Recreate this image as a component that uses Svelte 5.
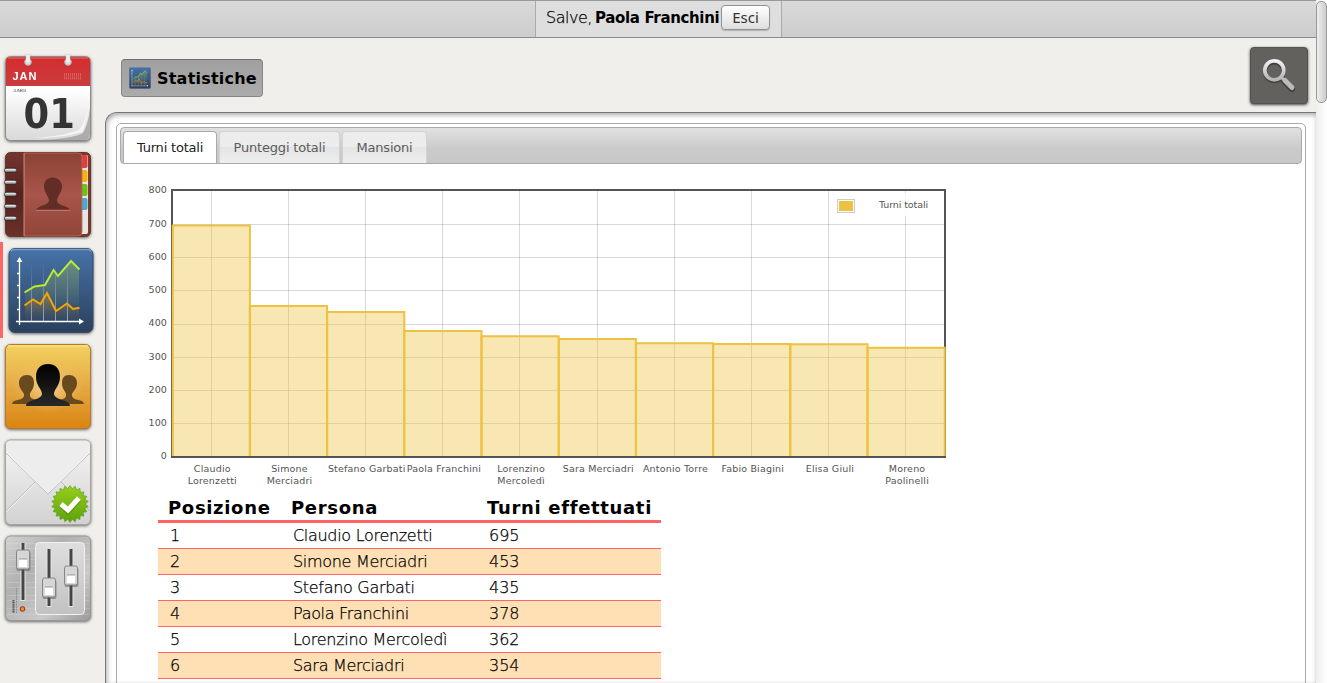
<script>
  const tabs = [
    { name: 'Turni totali', width: 94 },
    { name: 'Punteggi totali', width: 121 },
    { name: 'Mansioni', width: 85 }
  ];
  const icons = ['calendar', 'contacts', 'stats', 'people', 'mail', 'mixer'];
  const people = [
    { lines: ['Claudio', 'Lorenzetti'], turns: 695 },
    { lines: ['Simone', 'Merciadri'], turns: 453 },
    { lines: ['Stefano Garbati'], turns: 435 },
    { lines: ['Paola Franchini'], turns: 378 },
    { lines: ['Lorenzino', 'Mercoledì'], turns: 362 },
    { lines: ['Sara Merciadri'], turns: 354 },
    { lines: ['Antonio Torre'], turns: 341 },
    { lines: ['Fabio Biagini'], turns: 339 },
    { lines: ['Elisa Giuli'], turns: 338 },
    { lines: ['Moreno', 'Paolinelli'], turns: 327 }
  ];
  const ticks = [0, 100, 200, 300, 400, 500, 600, 700, 800];
  const step = 77.2;
  const left = 35;
  const base = 276.5;
  const yOf = (v) => base - v * 0.3322;
  const gear = Array.from({ length: 44 }, (_, i) => {
    const r = i % 2 ? 15.5 : 18.5;
    const a = (i * Math.PI) / 22;
    return `${70 + r * Math.sin(a)},${70 - r * Math.cos(a)}`;
  }).join(' ');
</script>

{#snippet plot()}
  <rect x="9" y="6.500" width="84" height="84" rx="6" fill="url(#blue)" stroke="#344d6b" />
  <path d="M11 9.500q0-2 4-2h72q4 0 4 2" fill="none" stroke="#7d9dc2" stroke-width="1.500" />
  <path d="M25 51l10-6 10-1 9-15 4 6 13-15 8 8v52H25z" fill="url(#greenFade)" />
  <path d="M25 64l8-6 7 4 7-10 9 17 11-7 6 5 6-1v13H25z" fill="url(#orangeFade)" />
  <path d="M31 20h1v59h-1zM43 20h1v59h-1zM55 20h1v59h-1zM67 20h1v59h-1z" fill="url(#lineFade)" />
  <path d="M19.500 18v65M16 79.500h65M17 31.500h3M17 43.500h3M17 55.500h3M17 67.500h3" stroke="#fff" stroke-width="1.300" />
  <path d="M16.500 20l3-5 3 5zM79 76.500l5 3-5 3z" fill="#fff" />
  <path d="M24.500 50.500l10-6 10.500-1.500 8.500-15 4.500 6 13-15 8.500 8.500" fill="none" stroke="#b9eb36" stroke-width="2" />
  <path d="M24.500 63.500l8.500-6 7.500 4.500 6.500-11 9 18 11-7.500 6 5.500 6.500-1.300" fill="none" stroke="#f6a400" stroke-width="2" />
{/snippet}

<svg class="defs" width="0" height="0">
  <defs>
    <linearGradient id="blue" x2="0" y2="1"><stop stop-color="#4673a9" /><stop offset="1" stop-color="#2b405c" /></linearGradient>
    <linearGradient id="greenFade" x2="0" y2="1"><stop stop-color="#b5cf45" stop-opacity=".35" /><stop offset=".85" stop-color="#b5cf45" stop-opacity="0" /></linearGradient>
    <linearGradient id="orangeFade" x2="0" y2="1"><stop stop-color="#d18a18" stop-opacity=".4" /><stop offset="1" stop-color="#d18a18" stop-opacity="0" /></linearGradient>
    <linearGradient id="lineFade" gradientUnits="userSpaceOnUse" x1="0" x2="0" y1="20" y2="79"><stop stop-color="#d7e0e4" stop-opacity="0" /><stop offset="1" stop-color="#d7e0e4" stop-opacity=".6" /></linearGradient>
    <linearGradient id="paper" x2="0" y2="1"><stop stop-color="#fff" /><stop offset=".4" stop-color="#fff" /><stop offset="1" stop-color="#d9d9d9" /></linearGradient>
    <linearGradient id="red" x2="0" y2="1"><stop stop-color="#d52c2e" /><stop offset="1" stop-color="#c93d3e" /></linearGradient>
    <linearGradient id="leather" x2="0" y2="1"><stop stop-color="#8c4236" /><stop offset=".5" stop-color="#a8554a" /><stop offset="1" stop-color="#914538" /></linearGradient>
    <linearGradient id="spine" x2="0" y2="1"><stop stop-color="#75352f" /><stop offset=".5" stop-color="#54231f" /><stop offset="1" stop-color="#6b302b" /></linearGradient>
    <linearGradient id="ring" x2="0" y2="1"><stop stop-color="#555" /><stop offset=".35" stop-color="#eee" /><stop offset="1" stop-color="#444" /></linearGradient>
    <linearGradient id="gold" x2="0" y2="1"><stop stop-color="#f3d160" /><stop offset=".5" stop-color="#e5a944" /><stop offset="1" stop-color="#da8410" /></linearGradient>
    <radialGradient id="glow"><stop stop-color="#f9d8a0" stop-opacity=".9" /><stop offset="1" stop-color="#f2bd69" stop-opacity="0" /></radialGradient>
    <linearGradient id="black" x2="0" y2="1"><stop /><stop offset="1" stop-color="#292929" /></linearGradient>
    <linearGradient id="mail" x2="0" y2="1"><stop stop-color="#f5f5f5" /><stop offset="1" stop-color="#d2d2d2" /></linearGradient>
    <linearGradient id="green" x2="0" y2="1"><stop stop-color="#98cf1b" /><stop offset="1" stop-color="#5da10d" /></linearGradient>
    <linearGradient id="metal" x2="1" y2="1"><stop stop-color="#d3d3d3" /><stop offset=".35" stop-color="#b1b1b1" /><stop offset=".7" stop-color="#c9c9c9" /><stop offset="1" stop-color="#999" /></linearGradient>
    <linearGradient id="panel" x2="0" y2="1"><stop stop-color="#dedede" /><stop offset="1" stop-color="#c2c2c2" /></linearGradient>
    <linearGradient id="lens" x2="0" y2="1"><stop stop-color="#f1f1f1" /><stop offset="1" stop-color="#b4b4b4" /></linearGradient>
  </defs>
</svg>

<div class="page">
  <header>
    <div class="user"><span class="hello">Salve,</span><b>Paola Franchini</b><button>Esci</button></div>
  </header>
  <div class="body">
    <nav>
      {#each icons as icon}
        <a class:active={icon === 'stats'} aria-label={icon}>
          <svg class="app" width="96" height="96" viewBox="0 0 96 96">
            {#if icon === 'calendar'}
              <rect x="5.500" y="6.500" width="85" height="84" rx="5" fill="url(#paper)" stroke="#8b8b8b" />
              <path d="M6 36V11q0-4 4-4h76q4 0 4 4v25z" fill="url(#red)" />
              <path d="M8 8h80" stroke="#ec6b69" />
              <path d="M83 83q5-8 7-25v27q-1 5-6 5H40q32-1 43-7z" fill="#9c9c9c" opacity=".75" />
              <path d="M89.500 50q-2 19-7 32-20 6-50 6 32-2 46-8 8-8 11-30z" fill="#f6f6f6" />
              {#each [28, 68] as x}
                <circle cx={x} cy="12.500" r="4.200" fill="#bf2728" />
                <circle cx={x} cy="12" r="3.500" fill="#dcdcd9" stroke="#a99c99" />
                <path d="M{x - 2} 5h4v7h-4z" fill="#eee" />
              {/each}
              <text x="12.500" y="30" class="jan" textLength="24">JAN</text>
              <text x="13.500" y="42" class="lunedi" textLength="12.500">LUNEDÌ</text>
              <text x="23.500" y="78" class="day">01</text>
              <path d="M64 24.500h18M64 28h18" stroke="#e78a88" stroke-width="3" stroke-dasharray="1 1" opacity=".5" />
            {:else if icon === 'contacts'}
              <rect x="5.500" y="6.500" width="85" height="84" rx="5" fill="#7e392e" stroke="#66362e" />
              <rect x="78" y="9" width="10" height="79" rx="2" fill="#e6e6e6" />
              <rect x="78" y="9" width="9.500" height="13" rx="2" fill="#e63b3d" />
              <rect x="78" y="24" width="9.500" height="12" rx="2" fill="#f8b20b" />
              <rect x="78" y="38" width="9.500" height="12" rx="2" fill="#69c415" />
              <rect x="78" y="52" width="9.500" height="12" rx="2" fill="#46acca" />
              <path d="M24 7h54q4 0 4 4v75q0 4-4 4H24z" fill="url(#leather)" stroke="#b96e5d" stroke-width=".8" />
              <path d="M24 7H11q-5 0-5 5v73q0 5 5 5h13z" fill="url(#spine)" />
              <path d="M24 7v83" stroke="#c98673" />
              <path d="M36 63.500c4-5 13-4 13-9 0-4-5-8-5-14 0-6 4-9 9-9s9 4 9 9c0 6-5 10-5 14 0 5 10 5 13 9z" fill="#612d25" />
              <path d="M36 64.500h34" stroke="#bd7465" />
              {#each [24, 36, 48, 60, 72] as y}
                <rect x="4.500" y={y - 2} width="12" height="4.600" rx="2.300" fill="url(#ring)" stroke="#382321" stroke-width=".7" />
              {/each}
            {:else if icon === 'stats'}
              {@render plot()}
            {:else if icon === 'people'}
              <rect x="5.500" y="6.500" width="85" height="84" rx="5" fill="url(#gold)" stroke="#b8792c" />
              <path d="M8 8h80" stroke="#ffe99c" />
              <ellipse cx="48" cy="48" rx="36" ry="27" fill="url(#glow)" />
              <path d="M12 66c0-5 11-3 12-8 1-4-5-6-5-13 0-5 3-8 8-8s7 3 7 8c0 7-5 9-4 13 0 4 10 3 12 8z" fill="#684a1e" />
              <path d="M84 66c0-5-11-3-12-8-1-4 5-6 5-13 0-5-3-8-8-8s-7 3-7 8c0 7 5 9 4 13 0 4-10 3-12 8z" fill="#684a1e" />
              <path d="M26 68c0-7 15-5 16-12 0-5-6-8-6-17 0-9 5-13 12-13s12 4 12 13c0 9-6 12-6 17 1 7 16 5 16 12z" fill="url(#black)" />
            {:else if icon === 'mail'}
              <rect x="5.500" y="6" width="85" height="84.500" rx="5" fill="url(#mail)" stroke="#a4a4a4" />
              <path d="M6 77l29-29M61 48l29 29" stroke="#bbb" />
              <path d="M6 78l29-29" stroke="#f4f4f4" />
              <path d="M6 18V11q0-4 4-4h76q4 0 4 4v7L48 60z" fill="#ededed" />
              <path d="M6 19l42 41 42-41" fill="none" stroke="#bdbdbd" />
              <path d="M6 18l42 41 42-41" fill="none" stroke="#fafafa" stroke-width=".7" />
              <polygon points={gear} fill="url(#green)" stroke="#679d2a" stroke-width=".7" />
              <path d="M61 71l7 6.500 11-12" fill="none" stroke="#447b18" stroke-width="5.500" opacity=".5" />
              <path d="M61 70l7 6 11-12" fill="none" stroke="#fff" stroke-width="5" />
            {:else}
              <rect x="5.500" y="6" width="85" height="84.500" rx="5" fill="url(#metal)" stroke="#979797" />
              {#each [13, 18, 25, 29, 36, 43, 52, 57, 65, 70, 78, 84] as y}<path d="M7 {y}.500h82" stroke="#eee" stroke-width=".6" opacity=".35" />{/each}
              <rect x="35.500" y="12.500" width="49" height="72" rx="4" fill="url(#panel)" stroke="#f2f2f2" />
              <path d="M23 13v58M49 19v58M71 19v58" stroke="#e6e6e6" stroke-width="5" />
              <path d="M23 13v57M49 19v57M71 19v57" stroke="#454545" stroke-width="3" />
              {#each [[23, 20], [49, 48], [71, 36]] as p}
                <rect x={p[0] - 6.5} y={p[1] + 2} width="14" height="19" rx="2" fill="#555" opacity=".5" />
                <rect x={p[0] - 6.5} y={p[1]} width="13" height="19" rx="2" fill="#d6d6d6" stroke="#858585" />
                <path d="M{p[0] - 4} {p[1] + 9}h8v8h-8z" fill="#fff" />
                <path d="M{p[0] - 4} {p[1] + 9}h8" stroke="#999" />
              {/each}
              <circle cx="22.500" cy="79" r="2.300" fill="#ff8b25" stroke="#a5260c" />
              <path d="M13.500 70v13" stroke="#555" stroke-width="2" stroke-dasharray="1.500 .6" /><path d="M16.500 58v25" stroke="#888" stroke-dasharray="1 .6" />
            {/if}
          </svg>
        </a>
      {/each}
    </nav>
    <main>
      <div class="heading">
        <h1><svg width="22" height="22" viewBox="8 5 86 87">{@render plot()}</svg><span>Statistiche</span></h1>
        <button class="search" aria-label="search">
          <svg width="58" height="57" viewBox="0 0 58 57">
            <g transform="translate(0 1.500)"><circle cx="24.300" cy="23.300" r="9.300" fill="none" stroke="#3d3d3d" stroke-width="4" /><path d="M34.500 33l7.500 7.500" stroke="#3d3d3d" stroke-width="6" stroke-linecap="round" /></g>
            <circle cx="24.300" cy="23.300" r="9.500" fill="none" stroke="url(#lens)" stroke-width="3.700" />
            <path d="M31 30l4 4" stroke="#bbb" stroke-width="3" /><path d="M35 33.500l7 7" stroke="#bbb" stroke-width="5" stroke-linecap="round" />
          </svg>
        </button>
      </div>
      <section class="sheet">
        <div class="tabbox">
          <div class="tabs">
            {#each tabs as tab, i}<div class="tab" class:selected={i === 0} style="width:{tab.width}px">{tab.name}</div>{/each}
          </div>
          <div class="content">
            <svg class="chart" width="820" height="316" viewBox="0 0 820 316">
              {#each ticks.slice(1, 8) as t}<path d="M34 {Math.round(yOf(t)) + 0.5}H809" class="grid" />{/each}
              {#each people as p, i}<path d="M{Math.round(left + step * (i + 0.5)) + 0.5} 10V277" class="grid" />{/each}
              <rect x="694" y="13" width="111" height="23" fill="#fff" fill-opacity=".85" />
              <rect x="35" y="10" width="773" height="267" fill="none" stroke="#545454" stroke-width="2" />
              {#each people as p, i}
                {@const x = left + step * i + (i ? 0.7 : 0.8)}
                <rect {x} y={yOf(p.turns)} width={step} height={base - yOf(p.turns)} fill="#edc240" fill-opacity=".4" />
                <path d="M{x} {base - 0.5}V{yOf(p.turns)}H{left + step * (i + 1) + 0.7}V{base - 0.5}" fill="none" stroke="#edc240" stroke-width="2" />
              {/each}
              <path d="M34 277H809" stroke="#545454" stroke-width="2" />
              {#each ticks as t}<text x="30" y={yOf(t) + 2.7} text-anchor="end" class="tick">{t}</text>{/each}
              {#each people as p, i}
                {#each p.lines as line, n}<text x={left + step * (i + 0.5) + 1.7} y={292 + n * 12} text-anchor="middle">{line}</text>{/each}
              {/each}
              <rect x="700.500" y="19.500" width="17" height="13" fill="#fff" stroke="#ccc" />
              <rect x="702" y="21" width="14" height="10" fill="#edc240" />
              <text x="742" y="28" class="legend">Turni totali</text>
            </svg>
            <table>
              <thead><tr><th>Posizione</th><th>Persona</th><th>Turni effettuati</th></tr></thead>
              <tbody>
                {#each people.slice(0, 6) as p, i}<tr><td>{i + 1}</td><td class="name">{p.lines.join(' ')}</td><td>{p.turns}</td></tr>{/each}
              </tbody>
            </table>
          </div>
        </div>
      </section>
    </main>
  </div>
  <div class="scroll"><div class="thumb"></div></div>
</div>

<style>
  :global(body) { overflow: hidden; background: #f0efeb; }
  * { box-sizing: border-box; }
  .page { position: relative; width: 1327px; height: 683px; overflow: hidden; background: #f0efeb; color: #000; font-family: "DejaVu Sans", sans-serif; }
  .defs { position: absolute; }
  header { height: 38px; display: flex; border-top: 1px solid #999; border-bottom: 1px solid #8b8b8b; background: linear-gradient(#d9d9d9, #cdcdcd); }
  .user { width: 247px; margin-left: 535px; padding-left: 10px; display: flex; align-items: flex-start; background: #dedede; border: 1px solid #aaa; border-width: 0 1px; line-height: 34px; }
  .hello { font: 200 16px/34px "DejaVu Sans Light", "DejaVu Sans", sans-serif; letter-spacing: -.5px; -webkit-text-stroke: .25px #000; width: 49px; white-space: nowrap; }
  b { font-size: 15px; letter-spacing: -.35px; width: 127px; white-space: nowrap; }
  .user button { margin-top: 4px; height: 25px; width: 49px; margin-left: -1px; padding: 0 0 2px; border: 1px solid #929292; border-radius: 4px; background: linear-gradient(#fff, #dedede); box-shadow: 0 1px 1px #8888; font: 15px "Noto Sans", sans-serif; line-height: 20px; color: #333; }
  .body { display: flex; }
  nav { width: 105px; padding-top: 12px; flex: none; }
  nav a { display: block; height: 96px; }
  nav a.active { border-left: 3px solid #ff6565; }
  .app { display: block; overflow: visible; filter: drop-shadow(0 1px 1.500px #444c); }
  nav a.active .app { margin-left: -3px; }
  .jan { font: bold 11px "Liberation Sans", sans-serif; fill: #fff; }
  .lunedi { font: 4px "Liberation Sans", sans-serif; fill: #555; }
  .day { font: bold 41px "DejaVu Sans Condensed", "DejaVu Sans", sans-serif; font-stretch: condensed; fill: #343434; }
  main { width: 1211px; flex: none; }
  .heading { height: 74px; padding: 8px 8px 0 16px; display: flex; justify-content: space-between; }
  h1 { margin: 13px 0 0; width: 142px; height: 38px; display: flex; align-items: center; padding-left: 7px; gap: 6px; border: 1px solid #858585; border-top-color: #6e6e6e; border-radius: 4px; background: linear-gradient(#a0a0a0, #ababab); font-size: 16px; letter-spacing: .22px; }
  h1 span { white-space: nowrap; }
  .search { width: 58px; height: 57px; margin-top: 1px; padding: 0; border: 1px solid #535250; border-radius: 4px; background: #62615e; box-shadow: 0 1px 3px #444; }
  .search svg { display: block; margin: -1px; }
  .sheet { height: 571px; padding: 10px 10px 0; background: #fff; border: 1px solid #777; border-width: 1px 0 0 1px; border-top-left-radius: 12px; box-shadow: inset 1px 2px 5px #aaa; }
  .tabbox { height: 700px; border: 1px solid #aaa; border-radius: 5px; padding: 3px; }
  .tabs { height: 37px; padding: 3px 2px 0; display: flex; gap: 2px; border: 1px solid #aaa; border-radius: 4px; background: linear-gradient(#e1e1e1, #cacaca 60%, #c8c8c8); }
  .tab { height: 32px; flex: none; border: 1px solid #d3d3d3; border-bottom: 0; border-radius: 4px 4px 0 0; background: linear-gradient(#ececec 50%, #e4e4e4 50%, #eee); color: #5c5c5c; text-align: center; font-size: 13px; letter-spacing: -.2px; line-height: 32px; white-space: nowrap; }
  .tab.selected { background: #fff; color: #212121; border-color: #aaa; }
  .content { padding: 16px 17px 0; }
  .chart { display: block; }
  .chart text { font: 9.500px "DejaVu Sans", sans-serif; letter-spacing: .18px; fill: #545454; }
  .chart .tick { letter-spacing: .1px; }
  .chart .legend { letter-spacing: -.1px; }
  .grid { stroke: #545454; stroke-opacity: .22; fill: none; }
  table { margin-left: 21px; border-collapse: collapse; table-layout: fixed; width: 503px; }
  th { text-align: left; font-size: 18px; letter-spacing: .67px; line-height: 22px; height: 25px; padding: 1px 0 0 10px; border-bottom: 3px solid #ff6565; white-space: nowrap; }
  th:nth-child(1) { width: 123px; }
  th:nth-child(2) { width: 196px; }
  td { height: 26px; padding: 0 0 0 12px; font: 200 16px/25px "DejaVu Sans Light", "DejaVu Sans", sans-serif; -webkit-text-stroke: .25px #000; border-bottom: 1px solid #ff6565; }
  .name { letter-spacing: -.3px; }
  tbody tr:nth-child(even) { background: #ffe0b5; }
  .scroll { position: absolute; right: 0; top: 0; width: 11px; height: 683px; background: linear-gradient(90deg, #eee, #fff); }
  .thumb { width: 11px; height: 102px; margin-top: 1px; border: 1px solid #999; border-radius: 5px; background: linear-gradient(90deg, #eee, #ccc); }
</style>
